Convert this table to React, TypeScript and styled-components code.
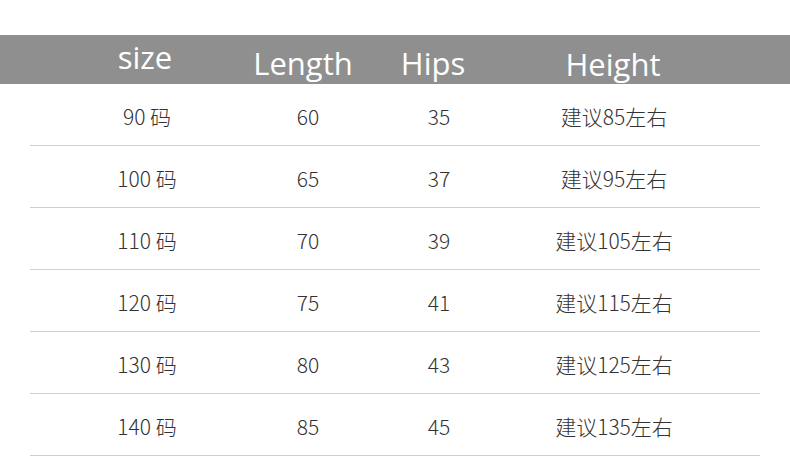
import React from "react";
import styled, { createGlobalStyle } from "styled-components";

const Global = createGlobalStyle`
  html, body { margin: 0; padding: 0; background: #ffffff; }
  body { width: 790px; height: 458px; overflow: hidden; }
`;

const Page = styled.div`
  width: 790px;
  height: 458px;
  padding-top: 35px;
  box-sizing: border-box;
  background: #ffffff;
`;

const HeaderBar = styled.div`
  display: grid;
  grid-template-columns: 230px 86px 174px 186px;
  height: 49px;
  padding-left: 30px;
  background: #8f8f8f;
  align-items: start;
`;

const HeaderCell = styled.div<{ $top: number }>`
  display: flex;
  justify-content: center;
  color: #ffffff;
  font-family: "Open Sans", "Noto Sans", sans-serif;
  font-size: 31px;
  line-height: 31px;
  padding-top: ${(p) => p.$top}px;
  white-space: nowrap;
`;

const Body = styled.div`
  margin: 0 30px;
`;

const Row = styled.div`
  display: grid;
  grid-template-columns: 234px 88px 174px 176px;
  height: 61px;
  box-sizing: content-box;
  border-bottom: 1px solid #cfcfcf;
  align-items: center;
`;

const Cell = styled.div`
  display: flex;
  justify-content: center;
  color: #333333;
  font-family: "Noto Sans CJK SC", "Noto Sans", sans-serif;
  font-weight: 300;
  font-size: 21px;
  line-height: 21px;
  padding-top: 4px;
  white-space: nowrap;
`;

const headers = [
  { label: "size", top: 7 },
  { label: "Length", top: 13 },
  { label: "Hips", top: 13 },
  { label: "Height", top: 14 },
];

const rows = [
  ["90 码", "60", "35", "建议85左右"],
  ["100 码", "65", "37", "建议95左右"],
  ["110 码", "70", "39", "建议105左右"],
  ["120 码", "75", "41", "建议115左右"],
  ["130 码", "80", "43", "建议125左右"],
  ["140 码", "85", "45", "建议135左右"],
];

export default function App() {
  return (
    <Page>
      <Global />
      <HeaderBar>
        {headers.map((h) => (
          <HeaderCell key={h.label} $top={h.top}>
            {h.label}
          </HeaderCell>
        ))}
      </HeaderBar>
      <Body>
        {rows.map((r) => (
          <Row key={r[0]}>
            {r.map((c, i) => (
              <Cell key={i}>{c}</Cell>
            ))}
          </Row>
        ))}
      </Body>
    </Page>
  );
}
